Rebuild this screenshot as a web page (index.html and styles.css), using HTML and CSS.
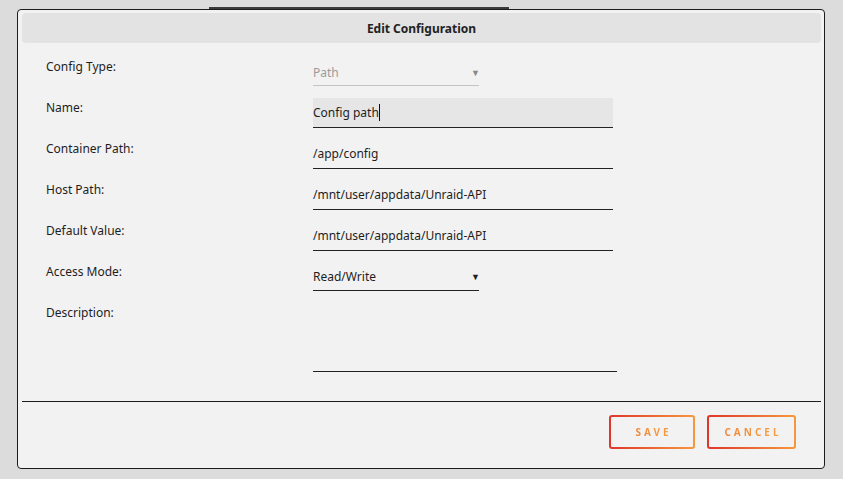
FILE: index.html
```html
<!DOCTYPE html>
<html lang="en">
<head>
    <meta charset="UTF-8">
    <meta name="viewport" content="width=device-width, initial-scale=1.0">
    <title>Edit Configuration</title>
    <link rel="stylesheet" href="styles.css">
</head>
<body>

    <div class="tab-line"></div>

    <div class="modal">
        <div class="modal-header">Edit Configuration</div>

        <div class="form">
            <div class="row">
                <label>Config Type:</label>
                <div class="select disabled">
                    <span>Path</span>
                    <span class="arrow">&#9660;</span>
                </div>
            </div>
            <div class="row">
                <label>Name:</label>
                <div class="input focused">Config path<span class="caret"></span></div>
            </div>
            <div class="row">
                <label>Container Path:</label>
                <div class="input">/app/config</div>
            </div>
            <div class="row">
                <label>Host Path:</label>
                <div class="input">/mnt/user/appdata/Unraid-API</div>
            </div>
            <div class="row">
                <label>Default Value:</label>
                <div class="input">/mnt/user/appdata/Unraid-API</div>
            </div>
            <div class="row">
                <label>Access Mode:</label>
                <div class="select">
                    <span>Read/Write</span>
                    <span class="arrow">&#9660;</span>
                </div>
            </div>
            <div class="row last">
                <label>Description:</label>
                <div class="textarea"></div>
            </div>
        </div>

        <div class="modal-footer">
            <button class="btn"><span>Save</span></button>
            <button class="btn"><span>Cancel</span></button>
        </div>
    </div>

</body>
</html>
```

FILE: styles.css
```css
body {
    margin: 0;
    padding-top: 7px;
    background: #dcdcdc;
    font-family: "Noto Sans", "Open Sans", sans-serif;
    font-size: 12px;
    color: #1e1e1e;
    height: 472px;
    overflow: hidden;
}

.tab-line {
    margin-left: 209px;
    width: 300px;
    height: 2px;
    background: #3a3a3a;
}

.modal {
    margin-left: 17px;
    width: 799px;
    height: 455px;
    background: #f2f2f2;
    border: 1px solid #1c1c1c;
    border-radius: 4px;
    padding: 3px 3px 0 4px;
    display: flex;
    flex-direction: column;
}

.modal-header {
    height: 29px;
    padding-top: 1px;
    line-height: 29px;
    background: #e3e3e3;
    border-radius: 4px;
    text-align: center;
    font-weight: bold;
    font-size: 12px;
    color: #222;
}

.form {
    padding: 14px 0 0 24px;
}

.row {
    display: grid;
    grid-template-columns: 267px 1fr;
    height: 41px;
}

.row.last {
    height: auto;
}

.row label {
    line-height: 20px;
}

.input {
    height: 29px;
    line-height: 30px;
    border-bottom: 1px solid #222;
    width: 300px;
    white-space: nowrap;
}

.input.focused {
    background: #e6e6e6;
}

.caret {
    display: inline-block;
    width: 1px;
    height: 17px;
    background: #111;
    vertical-align: -4px;
}

.select {
    width: 166px;
    height: 28px;
    border-bottom: 1px solid #222;
    display: flex;
    justify-content: space-between;
    align-items: center;
    white-space: nowrap;
}

.select .arrow {
    font-size: 9px;
    margin-right: -1px;
    color: #222;
}

.select.disabled {
    color: #9a9a9a;
    border-bottom-color: #c4c4c4;
    height: 26px;
    margin-top: 2px;
}

.select.disabled .arrow {
    color: #888;
}

.textarea {
    width: 304px;
    height: 68px;
    border-bottom: 1px solid #222;
}

.modal-footer {
    margin-top: 29px;
    border-top: 1px solid #1c1c1c;
    display: flex;
    justify-content: flex-end;
    gap: 12px;
    padding: 13px 25px 0 0;
}

.btn {
    height: 34px;
    padding: 0;
    border: 2px solid transparent;
    border-radius: 3px;
    background: linear-gradient(#f2f2f2, #f2f2f2) padding-box,
                linear-gradient(90deg, #e0352b, #f7983b) border-box;
    font-family: inherit;
    font-size: 10px;
    font-weight: bold;
    letter-spacing: 3px;
    text-transform: uppercase;
    cursor: pointer;
}

.btn:first-child {
    width: 86px;
}

.btn:last-child {
    width: 89px;
}

.btn span {
    background: linear-gradient(90deg, #ef8537, #f7a045);
    -webkit-background-clip: text;
    background-clip: text;
    color: transparent;
    padding-left: 3px;
}
```
